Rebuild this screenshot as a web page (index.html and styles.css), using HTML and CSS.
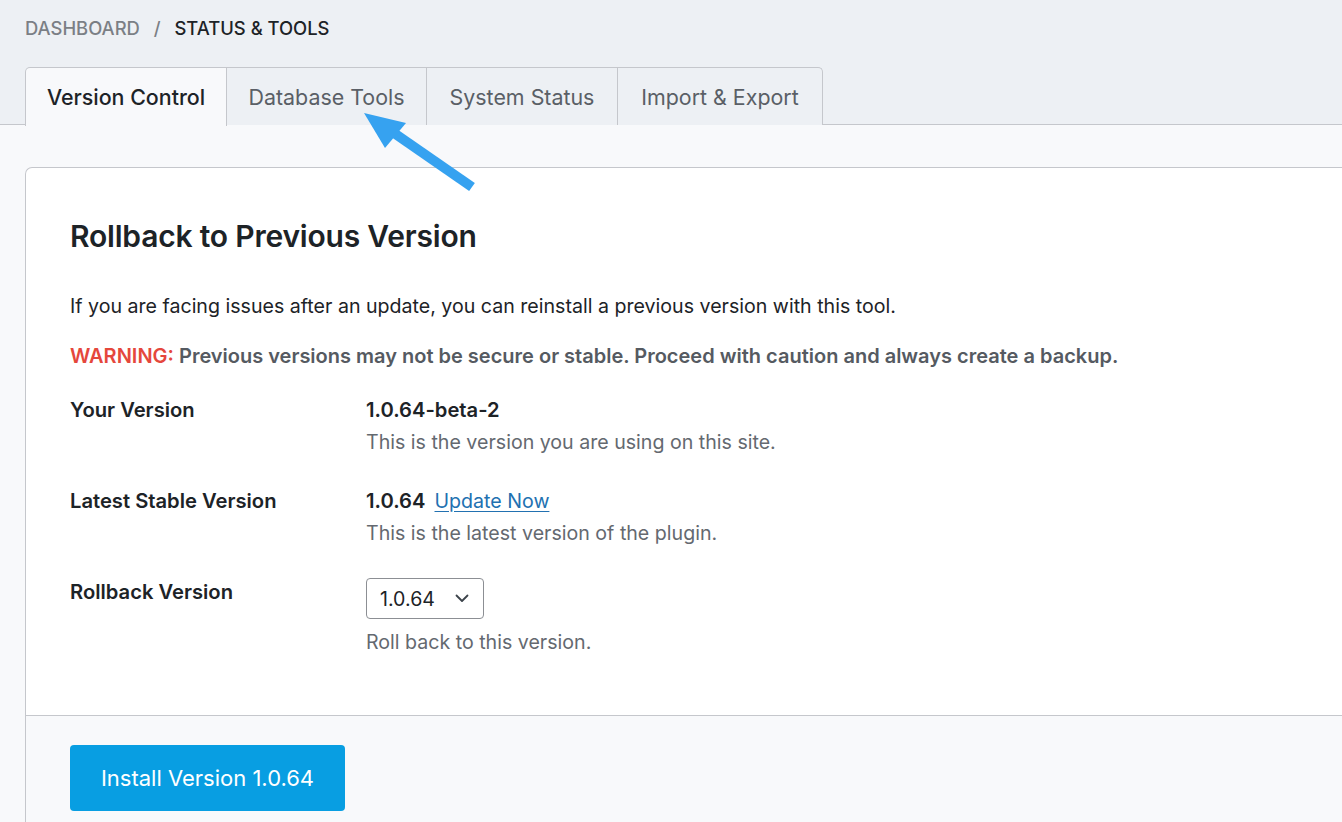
FILE: index.html
```html
<!DOCTYPE html>
<html lang="en">
<head>
<meta charset="utf-8">
<title>Status &amp; Tools</title>
<link rel="stylesheet" href="styles.css">
</head>
<body>
<div class="page">
  <nav class="breadcrumb">
    <span class="crumb-muted">DASHBOARD</span>
    <span class="crumb-sep">/</span>
    <span class="crumb-current">STATUS &amp; TOOLS</span>
  </nav>

  <div class="tabbar">
    <div class="tab tab-active">Version Control</div>
    <div class="tab">Database Tools</div>
    <div class="tab">System Status</div>
    <div class="tab tab-last">Import &amp; Export</div>
  </div>

  <div class="content">
    <section class="card">
      <div class="card-body">
        <h1 class="title">Rollback to Previous Version</h1>
        <p class="intro">If you are facing issues after an update, you can reinstall a previous version with this tool.</p>
        <p class="warning"><span class="warn-label">WARNING:</span> Previous versions may not be secure or stable. Proceed with caution and always create a backup.</p>

        <div class="rows">
          <div class="row">
            <div class="label">Your Version</div>
            <div class="value">
              <div class="val-main">1.0.64-beta-2</div>
              <div class="desc">This is the version you are using on this site.</div>
            </div>
          </div>
          <div class="row">
            <div class="label">Latest Stable Version</div>
            <div class="value">
              <div class="val-main">1.0.64 <a class="update-link" href="#">Update Now</a></div>
              <div class="desc">This is the latest version of the plugin.</div>
            </div>
          </div>
          <div class="row">
            <div class="label">Rollback Version</div>
            <div class="value">
              <div class="select">
                <span>1.0.64</span>
                <svg class="chev" width="14" height="9" viewBox="0 0 14 9"><path d="M1.5 1.5 L7 7 L12.5 1.5" fill="none" stroke="#3c434a" stroke-width="1.8" stroke-linecap="round" stroke-linejoin="round"/></svg>
              </div>
              <div class="desc desc-select">Roll back to this version.</div>
            </div>
          </div>
        </div>
      </div>
      <div class="card-footer">
        <button class="btn">Install Version 1.0.64</button>
      </div>
    </section>
  </div>

  <svg class="arrow" width="140" height="100" viewBox="0 0 140 100">
    <line x1="122" y1="87" x2="44" y2="33" stroke="#36a2f0" stroke-width="10"/>
    <polygon points="14,13 56,23 35,48" fill="#36a2f0"/>
  </svg>
</div>
</body>
</html>
```

FILE: styles.css
```css
* { box-sizing: border-box; }
html, body { margin: 0; padding: 0; }
body {
  background: #edf0f4;
  font-family: Inter, "Noto Sans", Roboto, sans-serif;
  color: #1d2327;
  overflow: hidden;
}
.page {
  position: relative;
  height: 822px;
  overflow: hidden;
}
.breadcrumb {
  padding: 16px 0 0 25px;
  height: 67px;
  font-size: 18.4px;
  font-weight: 500;
  line-height: 24px;
}
.crumb-muted { color: #7b7f85; }
.crumb-sep { color: #7b7f85; margin: 0 9px; }
.crumb-current { color: #1d2327; }

.tabbar {
  display: flex;
  padding-left: 25px;
  border-bottom: 1px solid #c5c7cc;
  height: 58px;
}
.tab {
  height: 58px;
  padding: 0;
  display: flex;
  align-items: center;
  justify-content: center;
  white-space: nowrap;
  flex: none;
  font-size: 21.4px;
  color: #5a5f66;
  background: #edf0f4;
  border: 1px solid #c5c7cc;
  border-left: none;
  border-bottom: none;
}
.tab-active {
  border-left: 1px solid #c5c7cc;
  border-top-left-radius: 5px;
  background: #f8f9fb;
  color: #1d2327;
  font-weight: 500;
  height: 59px;
  margin-bottom: -1px;
  width: 202px;
}
.tab:nth-child(2) { width: 200px; }
.tab:nth-child(3) { width: 191px; }
.tab-last { width: 205px; border-top-right-radius: 5px; }

.content {
  background: #f8f9fb;
  padding: 42px 0 0 25px;
}
.card {
  background: #ffffff;
  border: 1px solid #c5c7cc;
  border-right: none;
  border-bottom: none;
  border-top-left-radius: 7px;
}
.card-body {
  padding: 50px 44px 60px 44px;
}
.title {
  margin: 0;
  font-size: 30px;
  font-weight: 600;
  line-height: 36px;
  letter-spacing: -0.2px;
  color: #1d2327;
}
.intro {
  margin: 39px 0 0 0;
  font-size: 19.6px;
  line-height: 26px;
  color: #1d2327;
}
.warning {
  margin: 24px 0 0 0;
  font-size: 20px;
  line-height: 26px;
  font-weight: 600;
  color: #555a61;
}
.warn-label { color: #e5473c; }

.rows {
  margin-top: 28px;
  display: flex;
  flex-direction: column;
  gap: 33px;
}
.row {
  display: flex;
}
.label {
  width: 296px;
  font-size: 20.2px;
  font-weight: 600;
  line-height: 26px;
  color: #1d2327;
}
.value { flex: 1; }
.val-main {
  font-size: 20.2px;
  font-weight: 600;
  line-height: 26px;
  color: #1d2327;
}
.update-link {
  font-size: 19.6px;
  font-weight: 400;
  color: #2271b1;
  text-decoration: underline;
  text-underline-offset: 3px;
  margin-left: 4px;
}
.desc {
  margin-top: 6px;
  font-size: 19.6px;
  line-height: 26px;
  color: #646970;
}
.select {
  display: inline-flex;
  align-items: center;
  justify-content: space-between;
  width: 118px;
  height: 41px;
  margin-top: -1px;
  padding: 0 14px 0 13px;
  border: 1px solid #8c8f94;
  border-radius: 4px;
  font-size: 19.6px;
  color: #1d2327;
  background: #fff;
}
.chev { display: block; }
.desc-select { margin-top: 10px; }

.card-footer {
  border-top: 1px solid #c5c7cc;
  background: #f8f9fb;
  padding: 29px 44px 60px 44px;
}
.btn {
  width: 275px;
  height: 66px;
  border: none;
  border-radius: 4px;
  background: #089ee2;
  color: #ffffff;
  font-family: inherit;
  font-size: 22px;
  font-weight: 400;
  padding: 0;
}

.arrow {
  position: absolute;
  left: 350px;
  top: 100px;
}
```
